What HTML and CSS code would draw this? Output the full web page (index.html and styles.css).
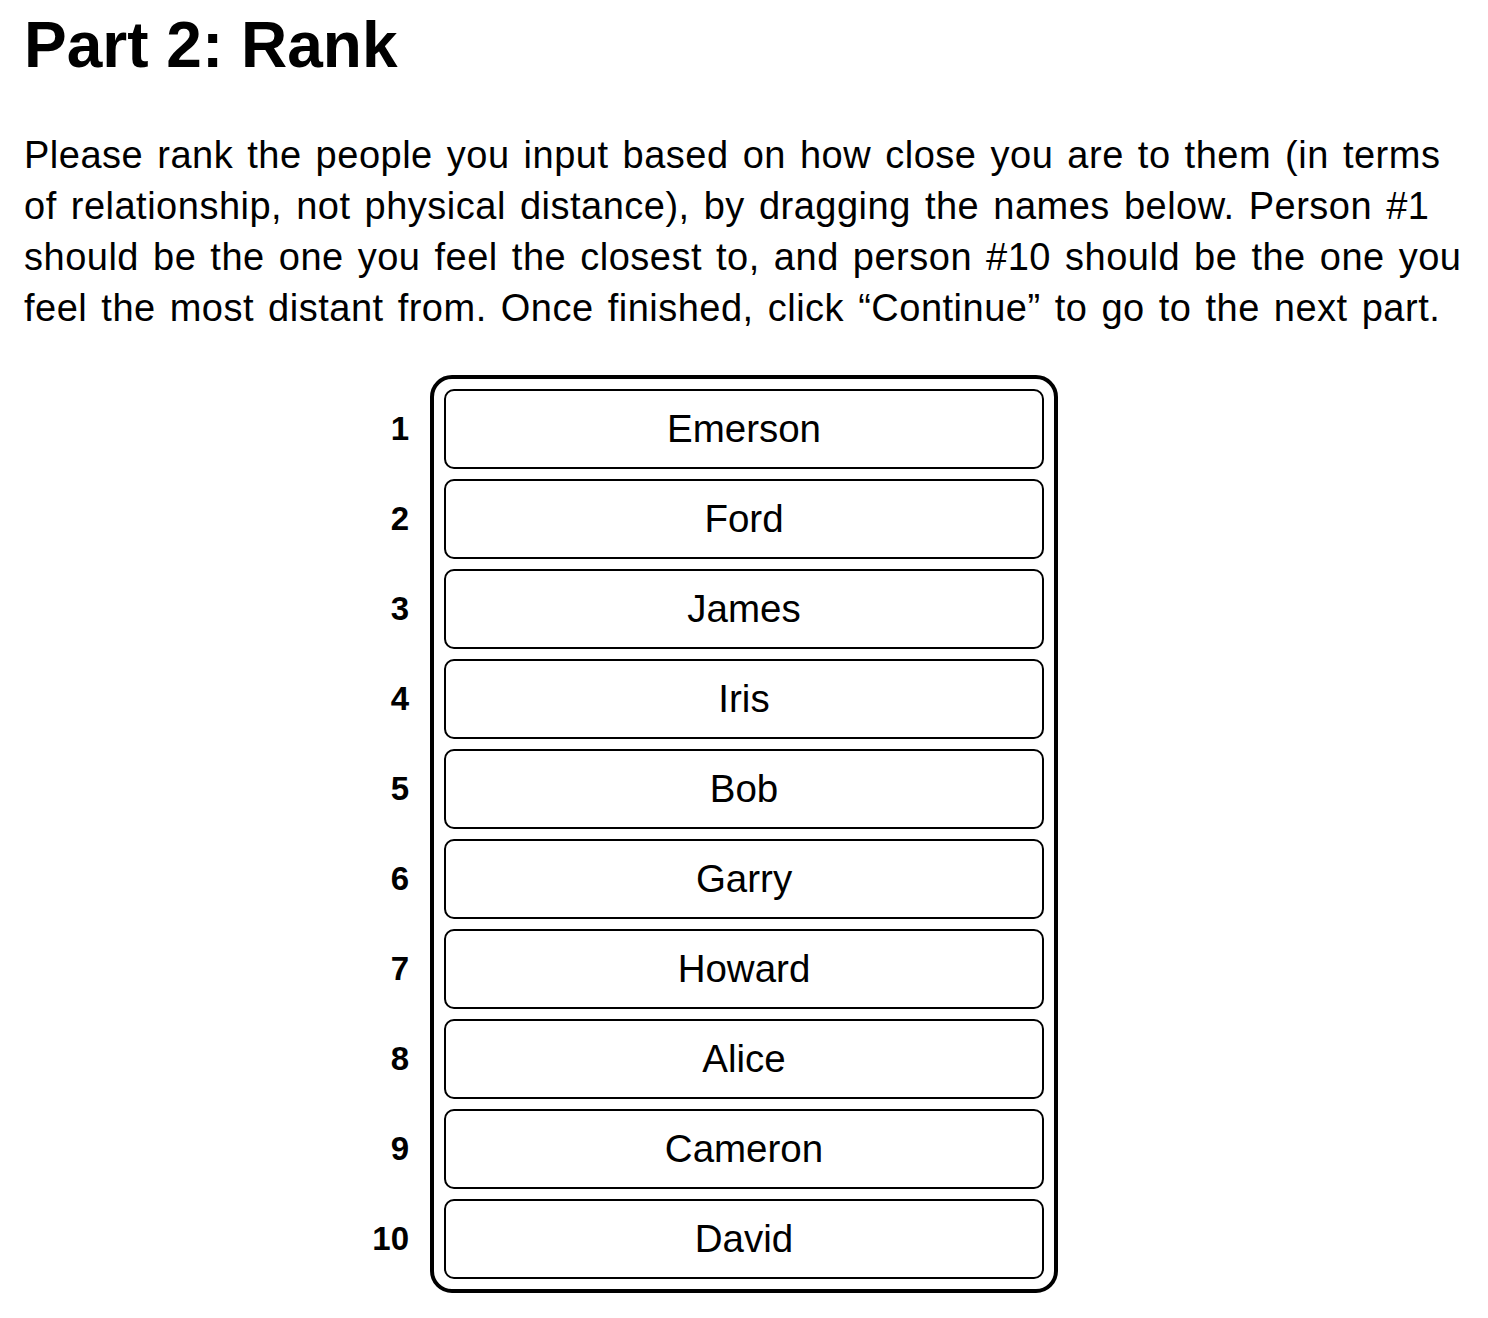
FILE: index.html
```html
<!DOCTYPE html>
<html lang="en">
<head>
<meta charset="utf-8">
<title>Part 2: Rank</title>
<link rel="stylesheet" href="styles.css">
</head>
<body>
<main class="page">
  <h1 class="title">Part 2: Rank</h1>
  <p class="intro">Please rank the people you input based on how close you are to them (in terms of relationship, not physical distance), by dragging the names below. Person #1 should be the one you feel the closest to, and person #10 should be the one you feel the most distant from. Once finished, click “Continue” to go to the next part.</p>
  <section class="ranker">
    <ol class="ranks">
      <li>1</li><li>2</li><li>3</li><li>4</li><li>5</li><li>6</li><li>7</li><li>8</li><li>9</li><li>10</li>
    </ol>
    <ul class="names">
      <li class="name">Emerson</li>
      <li class="name">Ford</li>
      <li class="name">James</li>
      <li class="name">Iris</li>
      <li class="name">Bob</li>
      <li class="name">Garry</li>
      <li class="name">Howard</li>
      <li class="name">Alice</li>
      <li class="name">Cameron</li>
      <li class="name">David</li>
    </ul>
    <div class="spacer"></div>
  </section>
</main>
</body>
</html>
```

FILE: styles.css
```css
html, body {
  margin: 0;
  padding: 0;
  background: #fff;
}
body {
  font-family: "Liberation Sans", Arial, Helvetica, sans-serif;
  color: #000;
}
.page {
  padding: 8px 24px 20px;
}
.title {
  margin: 0;
  font-size: 64px;
  font-weight: 700;
  line-height: 74px;
}
.intro {
  margin: 48px 0 0;
  font-size: 38px;
  line-height: 51px;
  letter-spacing: 0.5px;
  word-spacing: 3px;
}
.ranker {
  margin-top: 41px;
  display: grid;
  grid-template-columns: 1fr auto 1fr;
  column-gap: 21px;
}
.ranks {
  list-style: none;
  margin: 0;
  padding: 14px 0;
  display: flex;
  flex-direction: column;
  gap: 10px;
  align-items: flex-end;
}
.ranks li {
  height: 80px;
  display: flex;
  align-items: center;
  font-size: 33px;
  font-weight: 700;
}
.names {
  list-style: none;
  margin: 0;
  padding: 10px;
  width: 600px;
  border: 4px solid #000;
  border-radius: 22px;
  display: flex;
  flex-direction: column;
  gap: 10px;
}
.name {
  box-sizing: border-box;
  height: 80px;
  border: 2px solid #000;
  border-radius: 10px;
  display: flex;
  align-items: center;
  justify-content: center;
  font-size: 38.5px;
}
```
